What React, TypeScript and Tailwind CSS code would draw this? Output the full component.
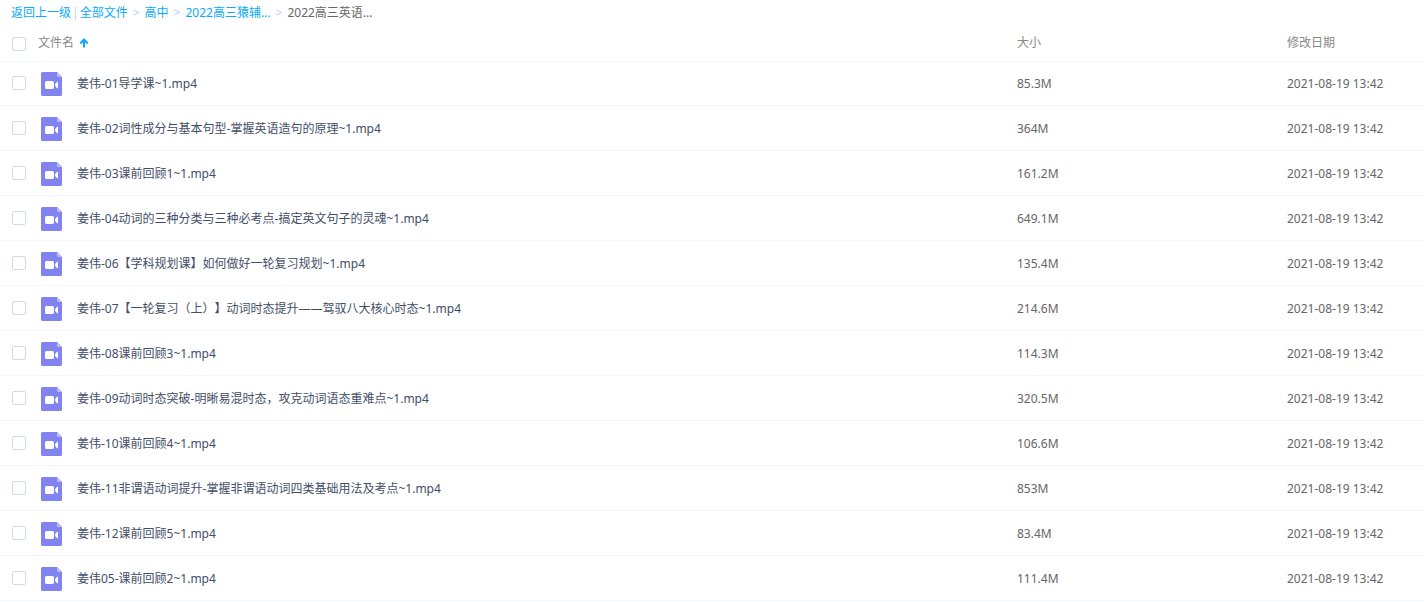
import React, { useState } from "react";

type FileRow = { name: string; size: string; date: string };

const DATE = "2021-08-19 13:42";

const FILES: FileRow[] = [
  { name: "姜伟-01导学课~1.mp4", size: "85.3M", date: DATE },
  { name: "姜伟-02词性成分与基本句型-掌握英语造句的原理~1.mp4", size: "364M", date: DATE },
  { name: "姜伟-03课前回顾1~1.mp4", size: "161.2M", date: DATE },
  { name: "姜伟-04动词的三种分类与三种必考点-搞定英文句子的灵魂~1.mp4", size: "649.1M", date: DATE },
  { name: "姜伟-06【学科规划课】如何做好一轮复习规划~1.mp4", size: "135.4M", date: DATE },
  { name: "姜伟-07【一轮复习（上）】动词时态提升——驾驭八大核心时态~1.mp4", size: "214.6M", date: DATE },
  { name: "姜伟-08课前回顾3~1.mp4", size: "114.3M", date: DATE },
  { name: "姜伟-09动词时态突破-明晰易混时态，攻克动词语态重难点~1.mp4", size: "320.5M", date: DATE },
  { name: "姜伟-10课前回顾4~1.mp4", size: "106.6M", date: DATE },
  { name: "姜伟-11非谓语动词提升-掌握非谓语动词四类基础用法及考点~1.mp4", size: "853M", date: DATE },
  { name: "姜伟-12课前回顾5~1.mp4", size: "83.4M", date: DATE },
  { name: "姜伟05-课前回顾2~1.mp4", size: "111.4M", date: DATE },
];

const PARENTS = ["全部文件", "高中", "2022高三猿辅..."];

function VideoIcon() {
  return (
    <svg width="21" height="24" viewBox="0 0 21 24" className="shrink-0" aria-hidden="true">
      <path d="M1.6 0H16L21 5V22.4A1.6 1.6 0 0 1 19.4 24H1.6A1.6 1.6 0 0 1 0 22.4V1.6A1.6 1.6 0 0 1 1.6 0Z" fill="#8183f1" />
      <path d="M16 0L21 5H17.2A1.2 1.2 0 0 1 16 3.8Z" fill="#b9baf7" />
      <rect x="4" y="9" width="9" height="8" rx="1.6" fill="#fff" />
      <path d="M17 9.4V16.6C15.6 16 14 14.4 14 13S15.6 10 17 9.4Z" fill="#fff" />
    </svg>
  );
}

function Checkbox({ label, checked, onChange }: { label: string; checked: boolean; onChange: () => void }) {
  return (
    <input
      type="checkbox"
      aria-label={label}
      checked={checked}
      onChange={onChange}
      className="block size-3.5 appearance-none rounded-xs border border-[#d4dae4] bg-white checked:border-[#09aaff] checked:bg-[#09aaff]"
    />
  );
}

function Separator() {
  return <span className="px-[5px] text-[#b4cffb]">&gt;</span>;
}

export default function App() {
  const [selected, setSelected] = useState<string[]>([]);
  const all = selected.length === FILES.length;
  const toggle = (name: string) =>
    setSelected((s) => (s.includes(name) ? s.filter((n) => n !== name) : [...s, name]));

  return (
    <main className="bg-white font-['Noto_Sans','Noto_Sans_CJK_SC',sans-serif] text-xs leading-6 text-[#666] [text-spacing-trim:space-all]">
      <nav aria-label="路径" className="flex h-[25px] items-end pl-[11px] whitespace-nowrap">
        <a href="#back" className="text-[#09aaff]">返回上一级</a>
        <span className="px-px text-[#b4cffb]">|</span>
        {PARENTS.map((name) => (
          <React.Fragment key={name}>
            <a href="#folder" className="text-[#09aaff]">{name}</a>
            <Separator />
          </React.Fragment>
        ))}
        <span>2022高三英语...</span>
      </nav>

      <table className="w-full table-fixed border-separate border-spacing-0 text-left">
        <thead>
          <tr className="h-9 text-[#888]">
            <th className="w-[38px] p-0 pt-px pl-3">
              <Checkbox label="全选" checked={all} onChange={() => setSelected(all ? [] : FILES.map((f) => f.name))} />
            </th>
            <th className="p-0 font-normal">
              <button type="button" className="flex items-center gap-1.5">
                文件名
                <svg width="8" height="10" viewBox="0 0 8 10" aria-hidden="true">
                  <path d="M4 0L8 4.2V5.8H6.6L5 4.2V9.5H3V4.2L1.4 5.8H0V4.2Z" fill="#09aaff" />
                </svg>
              </button>
            </th>
            <th className="w-[270px] p-0 font-normal">大小</th>
            <th className="w-[137px] p-0 font-normal">修改日期</th>
          </tr>
        </thead>
        <tbody className="[&_td]:border-b [&_td]:border-[#f2f6fd] [&>tr:first-child>td]:border-t">
          {FILES.map((file, i) => {
            const cell = i === 0 ? "p-0 pt-px" : "p-0 pt-0.5";
            return (
              <tr key={file.name} className="h-[45px]">
                <td className={i === 0 ? "p-0 pb-px pl-3" : "p-0 pl-3"}>
                  <Checkbox
                    label={file.name}
                    checked={selected.includes(file.name)}
                    onChange={() => toggle(file.name)}
                  />
                </td>
                <td className={cell}>
                  <div className="flex items-center gap-[15px] pl-[3px]">
                    <VideoIcon />
                    <a href="#file" className="truncate text-[#424e67]">{file.name}</a>
                  </div>
                </td>
                <td className={cell}>{file.size}</td>
                <td className={cell}>{file.date}</td>
              </tr>
            );
          })}
        </tbody>
      </table>
    </main>
  );
}
